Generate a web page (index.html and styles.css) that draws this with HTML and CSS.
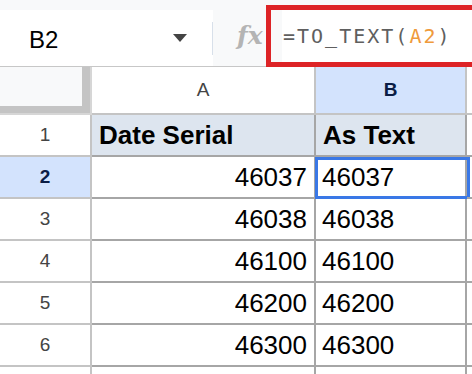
FILE: index.html
```html
<!DOCTYPE html>
<html lang="en">
<head>
    <meta charset="UTF-8">
    <meta name="viewport" content="width=device-width, initial-scale=1">
    <title>TO_TEXT</title>
    <link rel="stylesheet" href="styles.css">
</head>
<body>

<section class="sheet">
    <div class="toolbar">
        <div class="namebox">
            <span class="ref">B2</span>
            <span class="caret"></span>
            <span class="divider"></span>
        </div>
        <div class="fx">fx</div>
        <div class="formula">=TO_TEXT(<span class="arg">A2</span>)</div>
        <div class="callout"></div>
    </div>

    <div class="grid">
        <div class="corner"><div class="corner-fill"></div></div>
        <div class="colhead">A</div>
        <div class="colhead active">B</div>
        <div class="colhead"></div>

        <div class="rowhead">1</div>
        <div class="cell title">Date Serial</div>
        <div class="cell title">As Text</div>
        <div class="cell"></div>

        <div class="rowhead active">2</div>
        <div class="cell num">46037</div>
        <div class="cell selected">46037<span class="focus"></span></div>
        <div class="cell"></div>

        <div class="rowhead">3</div>
        <div class="cell num">46038</div>
        <div class="cell">46038</div>
        <div class="cell"></div>

        <div class="rowhead">4</div>
        <div class="cell num">46100</div>
        <div class="cell">46100</div>
        <div class="cell"></div>

        <div class="rowhead">5</div>
        <div class="cell num">46200</div>
        <div class="cell">46200</div>
        <div class="cell"></div>

        <div class="rowhead">6</div>
        <div class="cell num">46300</div>
        <div class="cell">46300</div>
        <div class="cell"></div>

        <div class="rowhead"></div>
        <div class="cell"></div>
        <div class="cell"></div>
        <div class="cell"></div>
    </div>
</section>

</body>
</html>
```

FILE: styles.css
```css
* {
    box-sizing: border-box;
}

body {
    margin: 0;
    font-family: "Liberation Sans", Arial, sans-serif;
    color: #000;
    background: #fff;
}

.sheet {
    position: relative;
    width: 472px;
    height: 374px;
    overflow: hidden;
}

/* name box + formula bar */

.toolbar {
    position: relative;
    display: flex;
    height: 67px;
    padding-top: 10px;
    background: #f8f9fa;
    border-bottom: 1px solid #c7c7c7;
}

.namebox {
    display: flex;
    align-items: center;
    width: 213px;
    background: #fff;
    padding-left: 29px;
}

.ref {
    font-size: 24px;
    color: #000;
    padding-top: 3px;
}

.caret {
    margin-left: auto;
    margin-right: 25px;
    width: 0;
    height: 0;
    border-left: 7.5px solid transparent;
    border-right: 7.5px solid transparent;
    border-top: 8px solid #444;
}

.divider {
    width: 1px;
    height: 33px;
    background: #d8e0ea;
}

.fx {
    display: flex;
    align-items: center;
    margin-left: 24px;
    width: 45px;
    font-family: "DejaVu Serif", serif;
    font-style: italic;
    font-weight: bold;
    font-size: 25px;
    color: #b4b4b4;
    padding-bottom: 6px;
}

.formula {
    flex: 1;
    display: flex;
    align-items: center;
    background: #fff;
    padding-left: 1px;
    padding-bottom: 5px;
    font-family: "DejaVu Sans Mono", monospace;
    font-size: 20px;
    letter-spacing: 2px;
    color: #5f5f5f;
    white-space: pre;
}

.formula .arg {
    color: #ef9a3c;
}

.callout {
    position: absolute;
    left: 266px;
    top: 5px;
    width: 212px;
    height: 62px;
    border: 5px solid #dd2326;
}

/* grid */

.grid {
    display: grid;
    grid-template-columns: 92px 224px 151px 1fr;
    grid-template-rows: 48px;
    grid-auto-rows: 42px;
}

.corner {
    background: #f8f9fa;
    border-right: 2px solid #d6d6d6;
    border-bottom: 2px solid #d6d6d6;
}

.corner-fill {
    height: 100%;
    border-right: 8px solid #c4c4c4;
    border-bottom: 7px solid #c4c4c4;
}

.colhead,
.rowhead {
    display: flex;
    align-items: center;
    justify-content: center;
    font-size: 19px;
    color: #444;
    background: #fff;
    border-right: 2px solid #c4c4c4;
    border-bottom: 2px solid #c4c4c4;
}

.colhead.active,
.rowhead.active {
    background: #d3e3fd;
    color: #0b1d45;
    font-weight: bold;
}

.cell {
    position: relative;
    display: flex;
    align-items: center;
    padding: 0 6px;
    font-size: 26px;
    border-right: 2px solid #a6a6a6;
    border-bottom: 2px solid #a6a6a6;
}

.cell.num {
    justify-content: flex-end;
    padding-right: 7px;
}

.cell.title {
    background: #dde5ef;
    font-weight: bold;
    padding-left: 7px;
}

.focus {
    position: absolute;
    left: -1px;
    right: -5px;
    top: 0;
    bottom: -2px;
    border: 3px solid #3a78e6;
}
```
